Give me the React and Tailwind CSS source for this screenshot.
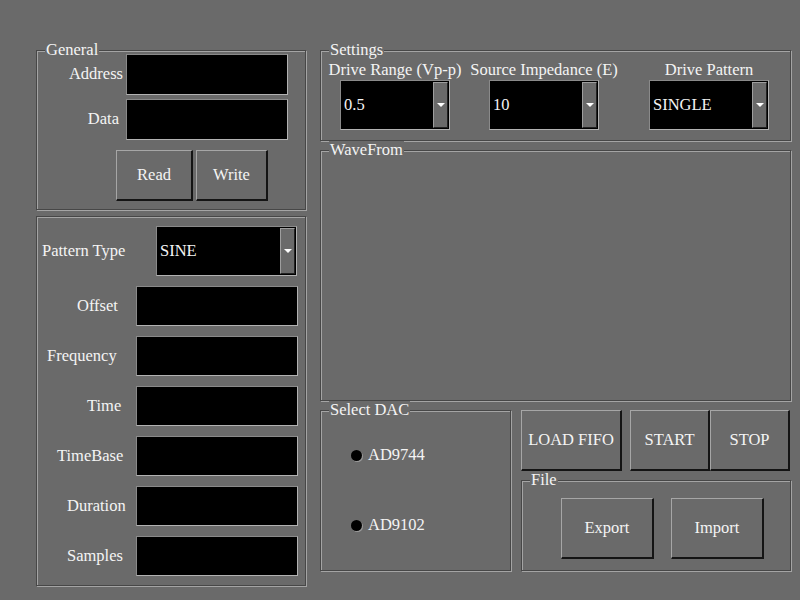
import React from "react";

// etched group box, like the old Win32 panels
function Box({ title, className = "", children }) {
  return (
    <div className={"relative border border-[#474747] shadow-[inset_1px_1px_0_#a4a4a4,1px_1px_0_#a4a4a4] " + className}>
      {title && (
        <span className="absolute top-[-10px] left-[8px] bg-[#6a6a6a] px-[1px] leading-[18px]">{title}</span>
      )}
      {children}
    </div>
  );
}

function Field({ className = "" }) {
  return <div className={"bg-black border border-[#8a8a8a] border-b-[#b2b2b2] border-r-[#b2b2b2] " + className} />;
}

function Btn({ label, className = "" }) {
  return (
    <button className={"flex items-center justify-center bg-[#6a6a6a] border-t border-l border-t-[#a6a6a6] border-l-[#a6a6a6] border-b-2 border-r-2 border-b-[#141414] border-r-[#141414] " + className}>
      {label}
    </button>
  );
}

function Combo({ value, className = "" }) {
  return (
    <div className={"flex items-center bg-black border border-[#8a8a8a] border-b-[#b2b2b2] border-r-[#b2b2b2] " + className}>
      <span className="flex-1 pl-[3px]">{value}</span>
      <div className="flex items-center justify-center self-stretch my-[1px] mr-[1px] w-[15px] bg-[#6a6a6a] border border-t-[#9e9e9e] border-l-[#9e9e9e] border-b-[#222] border-r-[#222]">
        <div className="w-0 h-0 border-l-[4px] border-r-[4px] border-t-[4px] border-l-transparent border-r-transparent border-t-white" />
      </div>
    </div>
  );
}

// label offsets taken from the original form, they don't line up
const PARAMS = [
  { label: "Offset", pad: "pl-[40px]" },
  { label: "Frequency", pad: "pl-[10px]" },
  { label: "Time", pad: "pl-[50px]" },
  { label: "TimeBase", pad: "pl-[20px]" },
  { label: "Duration", pad: "pl-[30px]" },
  { label: "Samples", pad: "pl-[30px]" },
];

function Radio({ label }) {
  return (
    <div className="flex items-center gap-[6px] leading-[24px]">
      <span className="w-[11px] h-[11px] rounded-full bg-black shadow-[1px_1px_0_#9a9a9a]" />
      <span>{label}</span>
    </div>
  );
}

export default function App() {
  return (
    <div className="font-[Liberation_Serif] w-[800px] h-[600px] bg-[#6a6a6a] text-[#f4f4f4] text-[16.5px] flex gap-[14px] pl-[36px] pt-[50px]">
      {/* left column */}
      <div className="flex flex-col gap-[6px] w-[270px]">
        <Box title="General" className="h-[160px] pt-[3px]">
          <div className="flex flex-col gap-[4px]">
            <div className="flex items-center">
              <span className="w-[86px] text-right">Address</span>
              <Field className="ml-[3px] w-[162px] h-[41px]" />
            </div>
            <div className="flex items-center">
              <span className="w-[86px] text-right pr-[4px]">Data</span>
              <Field className="ml-[3px] w-[162px] h-[41px]" />
            </div>
          </div>
          <div className="flex gap-[3px] mt-[10px] ml-[79px]">
            <Btn label="Read" className="w-[77px] h-[51px]" />
            <Btn label="Write" className="w-[72px] h-[51px]" />
          </div>
        </Box>

        <Box className="h-[370px] pt-[9px]">
          <div className="flex items-center">
            <span className="pl-[5px] w-[119px]">Pattern Type</span>
            <Combo value="SINE" className="w-[141px] h-[50px]" />
          </div>
          <div className="flex flex-col gap-[10px] mt-[10px]">
            {PARAMS.map((p) => (
              <div key={p.label} className="flex items-center">
                <span className={"w-[99px] " + p.pad}>{p.label}</span>
                <Field className="w-[162px] h-[40px]" />
              </div>
            ))}
          </div>
        </Box>
      </div>

      {/* right column */}
      <div className="flex flex-col w-[471px]">
        <Box title="Settings" className="h-[91px]">
          <div className="flex pt-[9px] pl-[4px]">
            <div className="flex flex-col items-center w-[140px]">
              <span className="leading-[20px]">Drive Range (Vp-p)</span>
              <Combo value="0.5" className="w-[110px] h-[50px]" />
            </div>
            <div className="flex flex-col items-center w-[152px] ml-[3px]">
              <span className="leading-[20px]">Source Impedance (E)</span>
              <Combo value="10" className="w-[110px] h-[50px]" />
            </div>
            <div className="flex flex-col items-center w-[138px] ml-[20px]">
              <span className="leading-[20px]">Drive Pattern</span>
              <Combo value="SINGLE" className="w-[120px] h-[50px]" />
            </div>
          </div>
        </Box>

        <Box title="WaveFrom" className="h-[251px] mt-[9px]" />

        <div className="flex gap-[10px] mt-[9px]">
          <Box title="Select DAC" className="w-[191px] h-[161px]">
            <div className="flex flex-col gap-[46px] pl-[30px] pt-[32px]">
              <Radio label="AD9744" />
              <Radio label="AD9102" />
            </div>
          </Box>
          <div className="flex flex-col w-[270px]">
            <div className="flex">
              <Btn label="LOAD FIFO" className="w-[101px] h-[61px]" />
              <Btn label="START" className="ml-[8px] w-[80px] h-[61px]" />
              <Btn label="STOP" className="w-[80px] h-[61px]" />
            </div>
            <Box title="File" className="mt-[9px] h-[91px]">
              <div className="flex gap-[17px] pl-[39px] pt-[17px]">
                <Btn label="Export" className="w-[93px] h-[61px]" />
                <Btn label="Import" className="w-[93px] h-[61px]" />
              </div>
            </Box>
          </div>
        </div>
      </div>
    </div>
  );
}
